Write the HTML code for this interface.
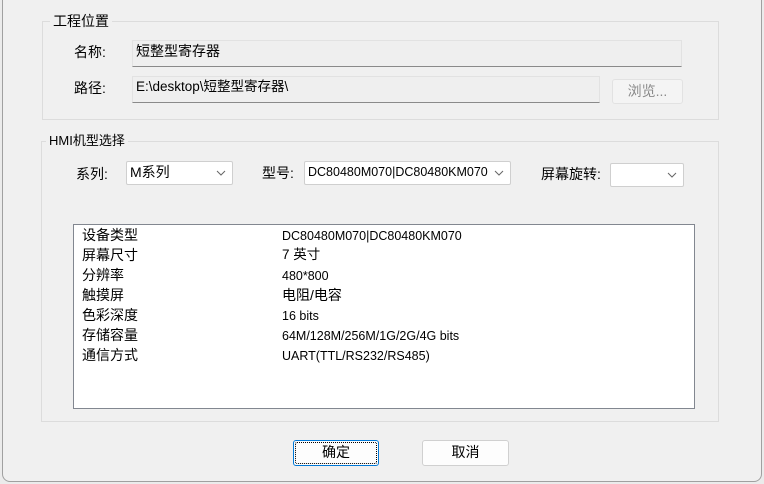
<!DOCTYPE html>
<html><head><meta charset="utf-8"><style>
*{box-sizing:border-box;margin:0;padding:0}
body{width:764px;height:484px;overflow:hidden;background:#ebebeb;position:relative;font-family:"Liberation Sans","Noto Sans CJK SC",sans-serif;font-size:13px;color:#000}
.dlg{position:absolute;left:2px;top:-10px;width:760px;height:492px;background:#f0f0f0;border:1px solid #a0a0a0;border-radius:8px}
.a{position:absolute}
.grp{position:absolute;border:1px solid #dcdcdc}
.gl{position:absolute;background:#f0f0f0;padding:0 3px;font-size:14px;line-height:16px}
.lbl{position:absolute;font-size:14px;line-height:16px}
.tf{position:absolute;background:#efefef;border:1px solid #e2e2e2;border-bottom:1px solid #8a8a8a;font-size:14px;line-height:20px;padding-left:3px}
.cb{position:absolute;background:#fff;border:1px solid #cfcfcf;border-radius:2px;font-size:12.5px;line-height:21px;padding-left:3px;color:#000}
.cb svg{position:absolute;right:6px;top:8px}
.btn{position:absolute;background:#fdfdfd;border:1px solid #d0d0d0;border-radius:3px;text-align:center;font-size:14px;line-height:23px}
.row{position:absolute;left:8px;font-size:14px;line-height:16px}
.val{position:absolute;left:208px;font-size:12.5px;line-height:16px}
</style></head><body>
<div class="dlg"></div>
<div class="grp" style="left:42px;top:21px;width:677px;height:99px"></div>
<div class="gl" style="left:50px;top:13px">工程位置</div>
<div class="lbl" style="left:74px;top:44px">名称:</div>
<div class="tf" style="left:132px;top:40px;width:550px;height:27px">短整型寄存器</div>
<div class="lbl" style="left:74px;top:80px">路径:</div>
<div class="tf" style="left:132px;top:76px;width:468px;height:27px;font-size:13.5px">E:\desktop\短整型寄存器\</div>
<div class="btn" style="left:612px;top:79px;width:71px;height:25px;color:#8a8a8a;background:#f4f4f4;border-color:#e2e2e2">浏览...</div>

<div class="grp" style="left:41px;top:141px;width:678px;height:281px"></div>
<div class="gl" style="left:46px;top:133px;font-size:13px">HMI机型选择</div>
<div class="lbl" style="left:76px;top:166px">系列:</div>
<div class="cb" style="left:126px;top:161px;width:107px;height:24px;font-size:14px">M系列<svg width="10" height="6"><path d="M1 1 L5 5 L9 1" fill="none" stroke="#666"/></svg></div>
<div class="lbl" style="left:262px;top:165px">型号:</div>
<div class="cb" style="left:304px;top:161px;width:207px;height:24px">DC80480M070|DC80480KM070<svg width="10" height="6"><path d="M1 1 L5 5 L9 1" fill="none" stroke="#666"/></svg></div>
<div class="lbl" style="left:541px;top:166px">屏幕旋转:</div>
<div class="cb" style="left:610px;top:163px;width:74px;height:24px"><svg width="10" height="6"><path d="M1 1 L5 5 L9 1" fill="none" stroke="#666"/></svg></div>

<div class="a" style="left:73px;top:224px;width:622px;height:185px;background:#fff;border:1px solid #828790">
<div class="row" style="top:2px">设备类型</div><div class="val" style="top:3px">DC80480M070|DC80480KM070</div>
<div class="row" style="top:22px">屏幕尺寸</div><div class="val" style="top:22px;font-size:13.5px">7 英寸</div>
<div class="row" style="top:42px">分辨率</div><div class="val" style="top:43px">480*800</div>
<div class="row" style="top:62px">触摸屏</div><div class="val" style="top:62px;font-size:14px">电阻/电容</div>
<div class="row" style="top:82px">色彩深度</div><div class="val" style="top:83px">16 bits</div>
<div class="row" style="top:102px">存储容量</div><div class="val" style="top:103px">64M/128M/256M/1G/2G/4G bits</div>
<div class="row" style="top:122px">通信方式</div><div class="val" style="top:123px">UART(TTL/RS232/RS485)</div>
</div>

<div class="btn" style="left:293px;top:440px;width:86px;height:26px;border:1px solid #0078d7"><div style="position:absolute;inset:1px;border:1px dotted #000;border-radius:2px"></div>确定</div>
<div class="btn" style="left:422px;top:440px;width:87px;height:26px">取消</div>
</body></html>
